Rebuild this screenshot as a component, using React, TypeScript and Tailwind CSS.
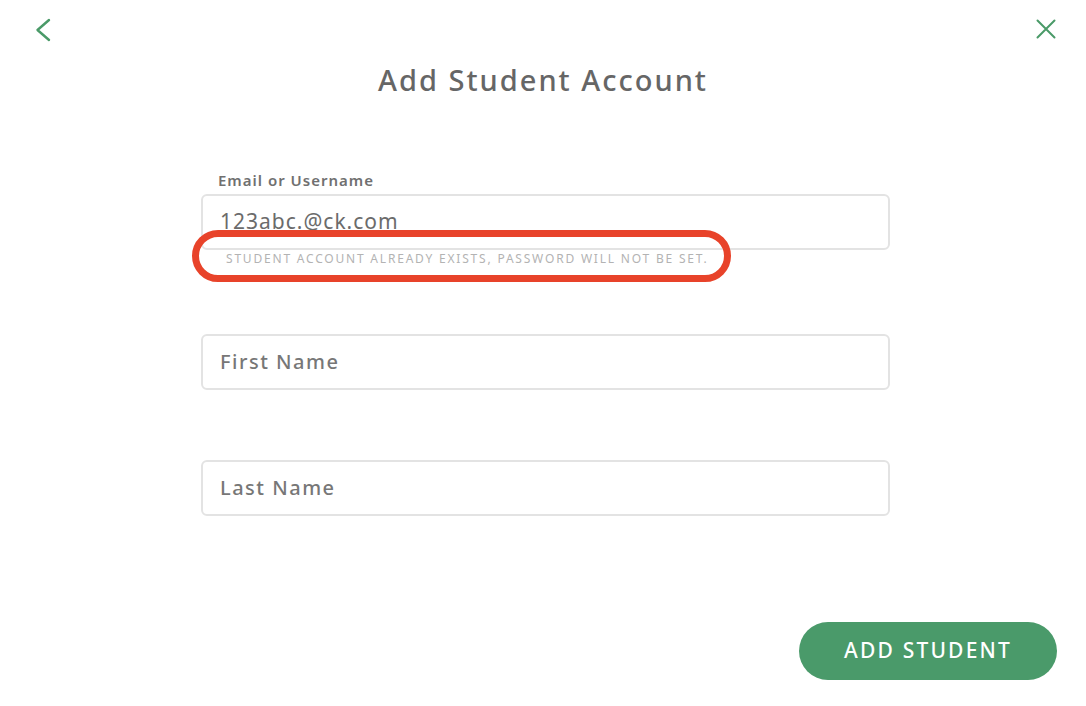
const font = { fontFamily: '"Noto Sans", Lato, sans-serif' };

function Field({ placeholder }: { placeholder: string }) {
    return (
        <div className="h-[56px] w-full rounded-[6px] border-2 border-[#e3e3e3] bg-white flex items-center px-[17px]">
            <span className="text-[20px] font-medium text-[#777777] tracking-[1.5px]">{placeholder}</span>
        </div>
    );
}

export default function App() {
    return (
        <div className="relative w-[1086px] h-[706px] bg-white overflow-hidden" style={font}>
            {/* top bar */}
            <div className="flex items-start justify-between pl-[35px] pr-[29px] pt-[18px] h-[56px]">
                <svg width="16" height="24" viewBox="0 0 16 24" fill="none" stroke="#4a9a68" strokeWidth="2.4" strokeLinecap="round" strokeLinejoin="round">
                    <path d="M14 2 L2.5 12 L14 22" />
                </svg>
                <svg width="22" height="22" viewBox="0 0 22 22" fill="none" stroke="#4a9a68" strokeWidth="2" strokeLinecap="round">
                    <path d="M2.5 2.5 L19.5 19.5 M19.5 2.5 L2.5 19.5" />
                </svg>
            </div>

            <h1 className="text-center text-[29px] font-medium text-[#666666] tracking-[2px] leading-[48px]">
                Add Student Account
            </h1>

            <div className="ml-[201px] w-[689px] mt-[66px]">
                <label className="block pl-[17px] text-[15px] font-semibold text-[#707070] tracking-[1px] leading-[20px] mb-[4px]">
                    Email or Username
                </label>
                <div className="h-[56px] w-full rounded-[6px] border-2 border-[#e3e3e3] bg-white flex items-center px-[17px]">
                    <span className="text-[21px] text-[#6b6b6b] tracking-[1px]">123abc.@ck.com</span>
                </div>
                <div className="relative pl-[25px] mt-[2px]">
                    <p className="text-[12px] text-[#b3b3b3] tracking-[1.8px] leading-[14px] uppercase whitespace-nowrap">
                        Student account already exists, password will not be set.
                    </p>
                    <div className="absolute left-[-9px] top-[-22px] w-[539px] h-[52px] rounded-full border-[7px] border-[#e8432a]"></div>
                </div>

                <div className="mt-[68px]">
                    <Field placeholder="First Name" />
                </div>
                <div className="mt-[70px]">
                    <Field placeholder="Last Name" />
                </div>
            </div>

            <div className="absolute right-[29px] bottom-[26px]">
                <button className="h-[58px] w-[258px] rounded-full bg-[#4a9a6a] text-white text-[21px] font-medium tracking-[2.2px]">
                    ADD STUDENT
                </button>
            </div>
        </div>
    );
}
